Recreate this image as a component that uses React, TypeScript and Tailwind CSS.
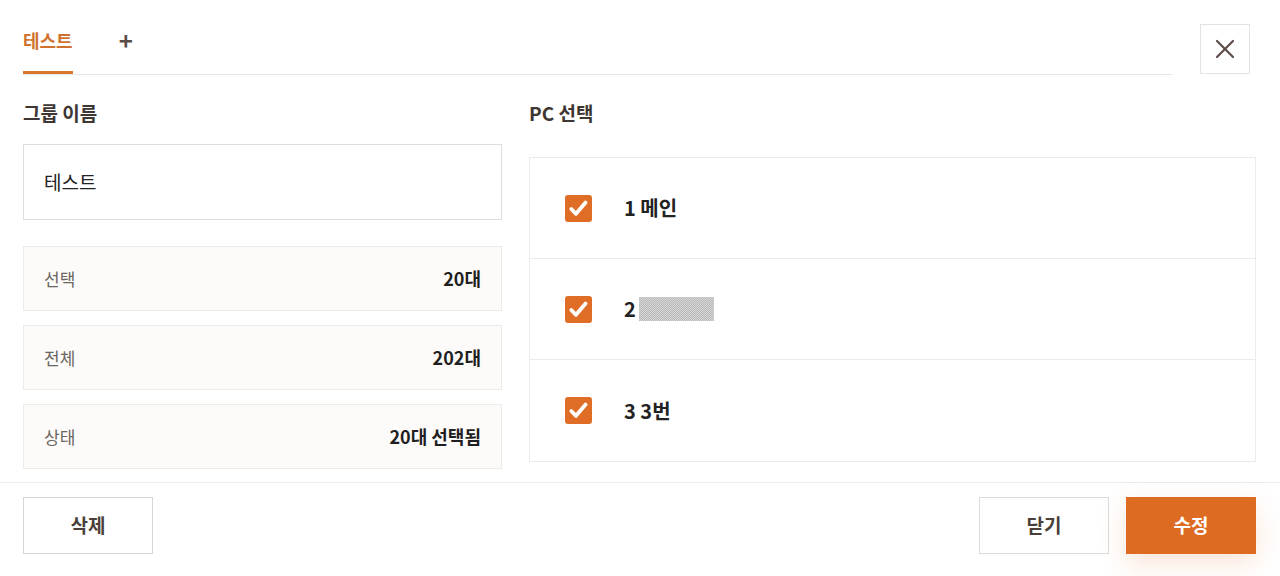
import { X } from 'lucide-react';

const font = "font-['Noto_Sans_CJK_KR','Noto_Sans',sans-serif]";

const infoRows = [
  { label: '선택', value: '20대' },
  { label: '전체', value: '202대' },
  { label: '상태', value: '20대 선택됨' },
];

function CheckBox() {
  return (
    <div className="w-[27px] h-[27px] rounded-[3px] bg-[#e06d25] flex items-center justify-center shrink-0">
      <svg width="27" height="27" viewBox="0 0 27 27" fill="none">
        <path d="M6.3 14 L11 18.8 L20.6 7.6" stroke="white" strokeWidth="3.8" strokeLinecap="round" strokeLinejoin="round" />
      </svg>
    </div>
  );
}

export default function App() {
  return (
    <div className={`${font} w-[1280px] h-[576px] bg-white flex flex-col overflow-hidden`}>
      {/* Header tabs */}
      <div className="flex items-start pl-[23px] pr-[30px]">
        <div className="flex-1 flex items-end gap-[46px] border-b border-[#e6e6e6]">
          <button className="pt-[28px] pb-[19px] border-b-[3px] border-[#d9772f] text-[18px] leading-[24px] font-bold text-[#d0722f]">
            테스트
          </button>
          <button className="pt-[28px] pb-[22px] text-[24px] leading-[24px] font-semibold text-[#5a4c45]">+</button>
        </div>
        <button className="ml-[28px] mt-[24px] w-[50px] h-[50px] border border-[#e3e3e3] flex items-center justify-center">
          <X className="w-[32px] h-[32px] text-[#5c4d46]" strokeWidth={1.6} />
        </button>
      </div>

      {/* Body */}
      <div className="flex-1 flex gap-[27px] pl-[23px] pr-[24px] pt-[26px]">
        <div className="w-[479px] flex flex-col">
          <div className="text-[19px] leading-[24px] font-semibold text-[#3d3632]">그룹 이름</div>
          <div className="mt-[19px] h-[76px] border border-[#dedede] flex items-center px-[20px] text-[19px] text-[#222]">
            테스트
          </div>
          <div className="mt-[26px] flex flex-col gap-[14px]">
            {infoRows.map((r) => (
              <div
                key={r.label}
                className="h-[65px] bg-[#fcfbf9] border border-[#eeebe7] flex items-center justify-between pl-[20px] pr-[20px]"
              >
                <span className="text-[17px] text-[#6b6561]">{r.label}</span>
                <span className="text-[18px] font-bold text-[#1f1f1f]">{r.value}</span>
              </div>
            ))}
          </div>
        </div>

        <div className="flex-1 flex flex-col">
          <div className="text-[19px] leading-[24px] font-semibold text-[#3d3632]">PC 선택</div>
          <div className="mt-[32px] border border-[#ebebeb] flex flex-col">
            <div className="h-[101px] flex items-center pl-[35px] gap-[32px] border-b border-[#ebebeb]">
              <CheckBox />
              <span className="text-[20px] font-bold text-[#222]">1 메인</span>
            </div>
            <div className="h-[101px] flex items-center pl-[35px] gap-[32px] border-b border-[#ebebeb]">
              <CheckBox />
              <span className="flex items-center text-[20px] font-bold text-[#222]">
                2
                <span className="ml-[3px] inline-block w-[75px] h-[24px] bg-[repeating-conic-gradient(#b9b9b9_0_25%,#d6d6d6_0_50%)] bg-[length:2px_2px]" />
              </span>
            </div>
            <div className="h-[101px] flex items-center pl-[35px] gap-[32px]">
              <CheckBox />
              <span className="text-[20px] font-bold text-[#222]">3 3번</span>
            </div>
          </div>
        </div>
      </div>

      {/* Footer */}
      <div className="h-[94px] border-t border-[#ececec] flex items-start pt-[14px] pl-[23px] pr-[24px]">
        <button className="w-[130px] h-[57px] border border-[#d6d6d6] text-[19px] font-bold text-[#4a3f39]">삭제</button>
        <div className="flex-1" />
        <button className="w-[130px] h-[57px] border border-[#dcdcdc] text-[19px] font-bold text-[#4a3f39]">닫기</button>
        <button className="ml-[17px] w-[130px] h-[57px] bg-[#de6b22] text-[19px] font-bold text-white shadow-[0_10px_28px_rgba(222,107,34,0.18)]">
          수정
        </button>
      </div>
    </div>
  );
}
